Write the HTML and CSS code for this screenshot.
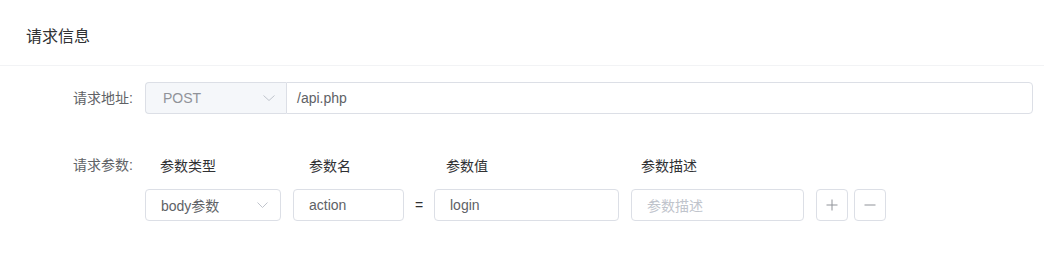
FILE: index.html
```html
<!DOCTYPE html>
<html lang="zh-CN">
<head>
<meta charset="utf-8">
<link rel="stylesheet" href="styles.css">
</head>
<body>
<div class="card">
  <div class="card-header">请求信息</div>
  <div class="card-body">
    <div class="form-item">
      <label class="form-label">请求地址:</label>
      <div class="input-group">
        <div class="select prepend">
          <span class="select-text">POST</span>
          <svg class="arrow" width="12" height="6" viewBox="0 0 12 6"><polyline points="0.5,0.5 6,5.5 11.5,0.5" fill="none" stroke="#C0C4CC" stroke-width="1"/></svg>
        </div>
        <div class="input url">/api.php</div>
      </div>
    </div>
    <div class="form-item params">
      <label class="form-label">请求参数:</label>
      <div class="params-body">
        <div class="param-head">
          <span class="col col-type">参数类型</span>
          <span class="col col-name">参数名</span>
          <span class="col col-eq"></span>
          <span class="col col-value">参数值</span>
          <span class="col col-desc">参数描述</span>
        </div>
        <div class="param-row">
          <div class="select col-type boxed">
            <span class="select-text">body参数</span>
            <svg class="arrow" width="11" height="6" viewBox="0 0 11 6"><polyline points="0.5,0.5 5.5,5.5 10.5,0.5" fill="none" stroke="#C0C4CC" stroke-width="1"/></svg>
          </div>
          <div class="input col-name">action</div>
          <span class="col-eq eq">=</span>
          <div class="input col-value">login</div>
          <div class="input col-desc placeholder">参数描述</div>
          <button class="btn">
            <svg width="12" height="12" viewBox="0 0 12 12"><path d="M6 0.5V11.5M0.5 6H11.5" stroke="#909399" stroke-width="1" fill="none"/></svg>
          </button>
          <button class="btn">
            <svg width="12" height="12" viewBox="0 0 12 12"><path d="M0.5 6H11.5" stroke="#909399" stroke-width="1" fill="none"/></svg>
          </button>
        </div>
      </div>
    </div>
  </div>
</div>
</body>
</html>
```

FILE: styles.css
```css
* { box-sizing: border-box; }
html, body { margin: 0; padding: 0; background: #fff; }
body {
  font-family: "Liberation Sans", "Noto Sans CJK SC", sans-serif;
  font-size: 14px;
  color: #606266;
  width: 1044px;
  height: 264px;
  overflow: hidden;
}
.card-header {
  height: 66px;
  padding: 0 26px;
  line-height: 74px;
  font-size: 16px;
  color: #303133;
  border-bottom: 1px solid #F2F3F5;
}
.card-body {
  padding-top: 16px;
  padding-right: 11px;
}
.form-item {
  display: flex;
  align-items: flex-start;
}
.form-label {
  width: 145px;
  flex: none;
  text-align: right;
  padding-right: 12px;
  line-height: 32px;
  color: #606266;
}
.input-group {
  flex: 1;
  display: flex;
  height: 32px;
}
.select, .input {
  height: 32px;
  border: 1px solid #DCDFE6;
  border-radius: 4px;
  display: flex;
  align-items: center;
  background: #fff;
}
.select {
  justify-content: space-between;
  padding: 0 12px 0 15px;
}
.prepend {
  width: 141px;
  background: #F5F7FA;
  border-right: none;
  border-radius: 4px 0 0 4px;
  padding-left: 17px;
  padding-right: 11px;
}
.prepend .select-text { color: #909399; }
.select-text { color: #606266; }
.input {
  padding: 0 15px;
  color: #606266;
}
.url {
  flex: 1;
  border-radius: 0 4px 4px 0;
  padding-left: 10px;
}
.params { margin-top: 35px; }
.params-body { display: flex; flex-direction: column; gap: 8px; }
.param-head {
  display: flex;
  height: 32px;
  align-items: center;
  color: #303133;
}
.param-row {
  display: flex;
  align-items: center;
}
.col-type { width: 136px; flex: none; }
.col-name { width: 111px; flex: none; margin-left: 12px; }
.col-eq { width: 30px; flex: none; }
.col-value { width: 185px; flex: none; }
.col-desc { width: 173px; flex: none; margin-left: 12px; }
.param-head .col-type { padding-left: 15px; }
.param-head .col-name { padding-left: 16px; }
.param-head .col-value { padding-left: 12px; }
.param-head .col-desc { padding-left: 10px; }
.boxed { padding-right: 12px; }
.eq {
  text-align: center;
  color: #303133;
  line-height: 32px;
}
.placeholder { color: #C0C4CC; }
.btn {
  width: 32px;
  height: 32px;
  margin-left: 12px;
  padding: 0;
  border: 1px solid #DCDFE6;
  border-radius: 4px;
  background: #fff;
  display: flex;
  align-items: center;
  justify-content: center;
}
.btn + .btn { margin-left: 6px; }
```
